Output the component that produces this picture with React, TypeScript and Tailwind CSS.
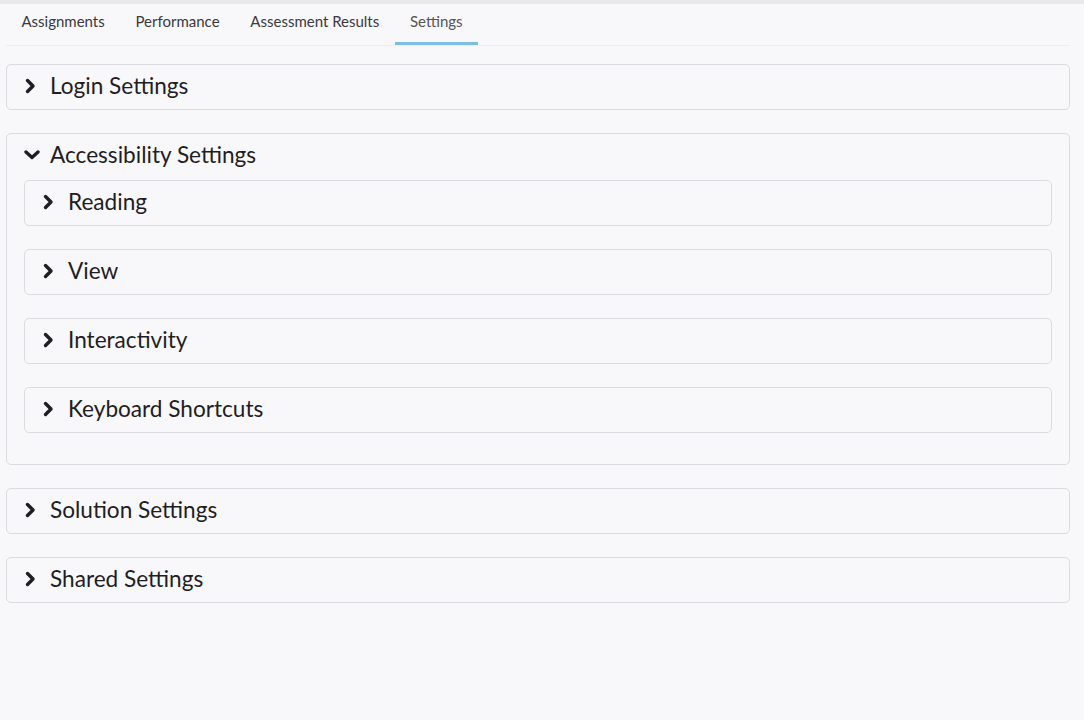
import { useState } from "react";

const tabs = ["Assignments", "Performance", "Assessment Results", "Settings"];

const Chevron = ({ open }: { open: boolean }) => (
  <svg
    width="16"
    height="16"
    viewBox="0 0 16 16"
    className="shrink-0"
    fill="none"
    stroke="#1e1e24"
    strokeWidth="3.4"
    strokeLinecap="round"
    strokeLinejoin="round"
  >
    {open ? <polyline points="2,5 8,10.5 14,5" /> : <polyline points="3.5,2.5 9,8 3.5,13.5" />}
  </svg>
);

const Panel = ({
  title,
  open,
  onToggle,
  children,
}: {
  title: string;
  open: boolean;
  onToggle: () => void;
  children?: React.ReactNode;
}) => (
  <div className="border border-[#dcdbdf] rounded-[5px] bg-[#f8f7f9] mb-[23px]">
    <button
      onClick={onToggle}
      className="flex items-center gap-[10px] w-full h-[44px] pl-[17px] pb-[2px] text-left text-[22.6px] text-[#1e1e24] cursor-pointer"
    >
      <Chevron open={open} />
      <span>{title}</span>
    </button>
    {open && children}
  </div>
);

export default function App() {
  const [active, setActive] = useState("Settings");
  const [open, setOpen] = useState<Record<string, boolean>>({ "Accessibility Settings": true });
  const toggle = (k: string) => setOpen((o) => ({ ...o, [k]: !o[k] }));

  return (
    <div
      className="min-h-[720px] bg-[#f8f7f9]"
      style={{ fontFamily: "Lato, 'Open Sans', sans-serif" }}
    >
      <div className="h-[4px] bg-[#e9e8eb]" />
      <div className="pl-[6px] pr-[14px]">
        {/* Tabs */}
        <div className="flex border-b border-[#e3f1f2] h-[42px]">
          {tabs.map((t) => (
            <button
              key={t}
              onClick={() => setActive(t)}
              className={
                "px-[15.4px] text-[15px] h-full flex items-center pb-[4px] border-b-[3px] -mb-px " +
                (active === t ? "border-[#7dbfe3] text-[#555]" : "border-transparent text-[#3a3a40]")
              }
            >
              {t}
            </button>
          ))}
        </div>

        <div className="pt-[18px]">
          <Panel title="Login Settings" open={!!open["Login Settings"]} onToggle={() => toggle("Login Settings")} />
          <Panel
            title="Accessibility Settings"
            open={!!open["Accessibility Settings"]}
            onToggle={() => toggle("Accessibility Settings")}
          >
            <div className="px-[17px] pt-[2px] pb-[8px]">
              {["Reading", "View", "Interactivity", "Keyboard Shortcuts"].map((s) => (
                <Panel key={s} title={s} open={!!open[s]} onToggle={() => toggle(s)} />
              ))}
            </div>
          </Panel>
          <Panel title="Solution Settings" open={!!open["Solution Settings"]} onToggle={() => toggle("Solution Settings")} />
          <Panel title="Shared Settings" open={!!open["Shared Settings"]} onToggle={() => toggle("Shared Settings")} />
        </div>
      </div>
    </div>
  );
}
